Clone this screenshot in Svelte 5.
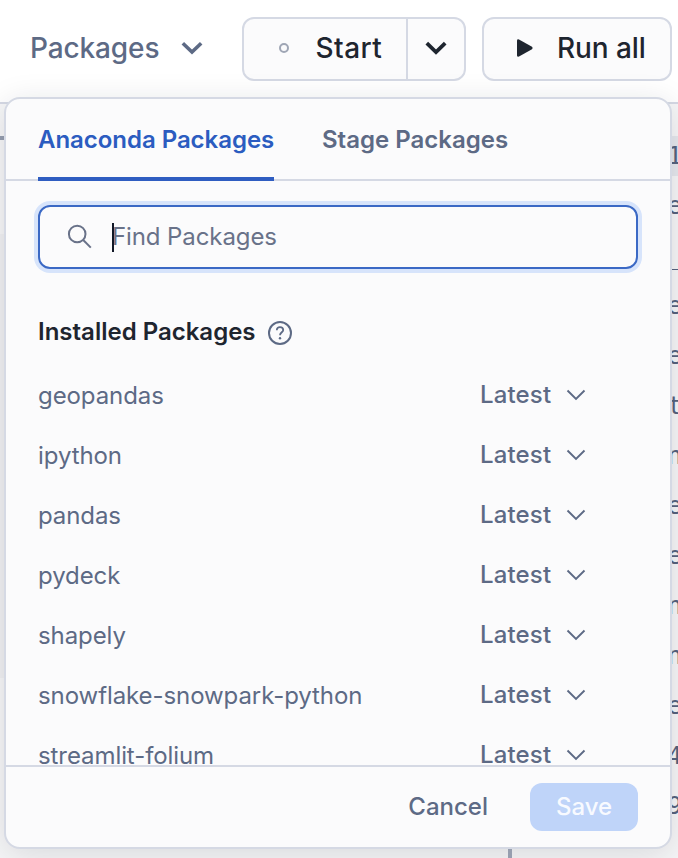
<script>
  const packages = ['geopandas', 'ipython', 'pandas', 'pydeck', 'shapely', 'snowflake-snowpark-python', 'streamlit-folium'];
  const behind = ['1', 'e', '_', 'e', 'e', 't', 'n', 'e', 'e', 'n', 'n', 'e', '4', '9'];
</script>

<div class="app">
  <header>
    <div class="crumb"><span>Packages</span>
      <svg width="22" height="14" viewBox="0 0 22 14"><path d="M1.8 2.2 11 11 20.2 2.2" fill="none" stroke="currentColor" stroke-width="3.6" /></svg>
    </div>
    <div class="split">
      <div class="start"><i></i><span>Start</span></div>
      <div class="more"><svg width="22" height="14" viewBox="0 0 22 14"><path d="M1.8 2.2 11 11 20.2 2.2" fill="none" stroke="currentColor" stroke-width="3.8" /></svg></div>
    </div>
    <div class="run">
      <svg width="18" height="20" viewBox="0 0 18 20"><path d="M3 1.4 16 8.8Q17.4 10 16 11.2L3 18.6Q1 19 1 17.4V2.6Q1 1 3 1.4Z" fill="currentColor" /></svg>
      <span>Run all</span>
    </div>
  </header>

  <div class="canvas">
    <div class="gutter"><b></b></div>
    <div class="stem"></div>
    <div class="code">
      {#each behind as c, i}<div class:hl={i === 0}>{c}</div>{/each}
    </div>
  </div>

  <section class="panel">
    <nav>
      <div class="tab active"><span>Anaconda Packages</span></div>
      <div class="tab"><span>Stage Packages</span></div>
    </nav>
    <div class="body">
      <div class="search">
        <svg width="26" height="26" viewBox="0 0 26 26"><g fill="none" stroke="currentColor" stroke-width="2"><circle cx="10.2" cy="10" r="8.3" /><path d="M16.2 16 23.8 23.6" /></g></svg>
        <div class="field"><i></i><span>Find Packages</span></div>
      </div>
      <h2><span>Installed Packages</span>
        <svg width="26" height="26" viewBox="0 0 26 26"><g fill="none" stroke="currentColor" stroke-width="2"><circle cx="13" cy="13" r="11" /><path d="M9.8 10.3C9.8 8.3 11.1 7.1 13 7.1S16.2 8.3 16.2 10C16.2 12.2 13 12.4 13 15.3" stroke-width="1.8" /></g><circle cx="13" cy="18.2" r="1.2" fill="currentColor" /></svg>
      </h2>
      <ul>
        {#each packages as name}
          <li><span class="name">{name}</span><span class="ver">Latest</span>
            <svg width="20" height="12" viewBox="0 0 20 12"><path d="M1.5 1.5 10 10 18.5 1.5" fill="none" stroke="currentColor" stroke-width="1.9" /></svg></li>
        {/each}
      </ul>
    </div>
    <footer><span class="cancel">Cancel</span><div class="save"><span>Save</span></div></footer>
  </section>
</div>

<style>
  .app { position: relative; width: 678px; height: 858px; overflow: hidden; background: #fff; font-family: Inter, sans-serif; color: #5d6a85; }
  .app * { box-sizing: border-box; }
  svg { display: block; flex: none; }
  header { height: 104px; border-bottom: 2px solid #d5d9e4; display: flex; align-items: flex-start; padding-top: 17px; font-size: 28px; font-weight: 500; line-height: 62px; white-space: nowrap; }
  .crumb { width: 242px; padding-left: 30px; display: flex; align-items: center; }
  .crumb span { width: 151px; letter-spacing: -.12px; }
  .split, .run { height: 64px; border: 2px solid #d5d9e4; border-radius: 12px; background: #fbfbfc; color: #1e252f; display: flex; align-items: center; }
  .split { width: 224px; margin-right: 16px; }
  .start { width: 164px; height: 60px; display: flex; align-items: center; border-right: 2px solid #d5d9e4; padding-bottom: 2px; }
  .start span { letter-spacing: .4px; }
  .start i { width: 10px; height: 10px; margin: 0 26.6px 0 35px; border: 2px solid #9fa6b5; border-radius: 50%; }
  .more { width: 56px; display: flex; justify-content: center; padding-bottom: 2px; }
  .run { width: 190px; padding: 0 0 2px 32px; }
  .run span { margin-left: 23px; letter-spacing: -.1px; }
  .canvas { position: relative; height: 754px; background: #f6f6f7; display: flex; justify-content: space-between; padding-top: 32px; }
  .gutter { width: 4px; height: 542px; background: linear-gradient(#f6f6f7 98px, #f0f0f2 98px); }
  .gutter b { display: block; height: 4px; background: #969eaf; }
  .stem { position: absolute; left: 508px; bottom: 0; width: 4px; height: 9px; background: #969eaf; z-index: 3; }
  .code { width: 10px; font-family: "DejaVu Sans Mono", monospace; font-size: 24px; line-height: 40px; color: #55627d; }
  .code div { height: 40px; margin-bottom: 10px; text-indent: -.4px; }
  .code .hl { background: #e5e7ec; }
  .panel { position: absolute; left: 4px; top: 97px; width: 668px; height: 752px; border: 2px solid #d5d9e4; border-radius: 16px; background: #fbfbfc; box-shadow: 0 6px 32px rgba(25, 30, 45, .13); display: flex; flex-direction: column; overflow: hidden; z-index: 2; }
  nav { height: 82px; flex: none; border-bottom: 2px solid #d5d9e4; padding-left: 32px; display: flex; gap: 48px; font-size: 24px; font-weight: 600; line-height: 82px; white-space: nowrap; }
  .tab { height: 82px; }
  .tab.active { width: 236px; color: #2b5cc0; border-bottom: 4px solid #2f5dc1; letter-spacing: -.04px; }
  .body { height: 584px; overflow: hidden; padding: 24px 32px 0; }
  .search { height: 64px; border: 2px solid #3b69c5; border-radius: 12px; box-shadow: 0 0 0 4px #d7e4fb; display: flex; align-items: center; padding-left: 27px; font-size: 24px; color: #697289; }
  .field { display: flex; align-items: center; margin-left: 19px; letter-spacing: -.1px; }
  .field span { padding-bottom: 2px; }
  .field i { width: 2px; height: 29px; margin-right: -2px; background: #111827; z-index: 1; }
  h2 { margin: 46px 0 0; height: 34px; display: flex; align-items: center; font-size: 24px; font-weight: 600; color: #1e252f; }
  h2 span { width: 229px; white-space: nowrap; padding-bottom: 2px; }
  h2 svg { color: #5d6a85; margin-top: 2px; }
  ul { list-style: none; margin: 16px 0 0; padding: 0; }
  li { height: 60px; display: flex; align-items: center; font-size: 24px; }
  .name { width: 442px; letter-spacing: -.08px; }
  .ver { width: 86px; font-weight: 500; letter-spacing: .15px; padding-bottom: 2px; }
  footer { height: 82px; flex: none; border-top: 2px solid #d5d9e4; display: flex; align-items: center; justify-content: flex-end; padding-right: 32px; font-size: 24px; font-weight: 500; }
  .cancel { margin-right: 42px; padding-bottom: 2px; }
  .save { width: 108px; height: 48px; border-radius: 12px; background: #bfd4f9; color: #f8faff; display: flex; align-items: center; justify-content: center; padding-bottom: 2px; }
</style>
